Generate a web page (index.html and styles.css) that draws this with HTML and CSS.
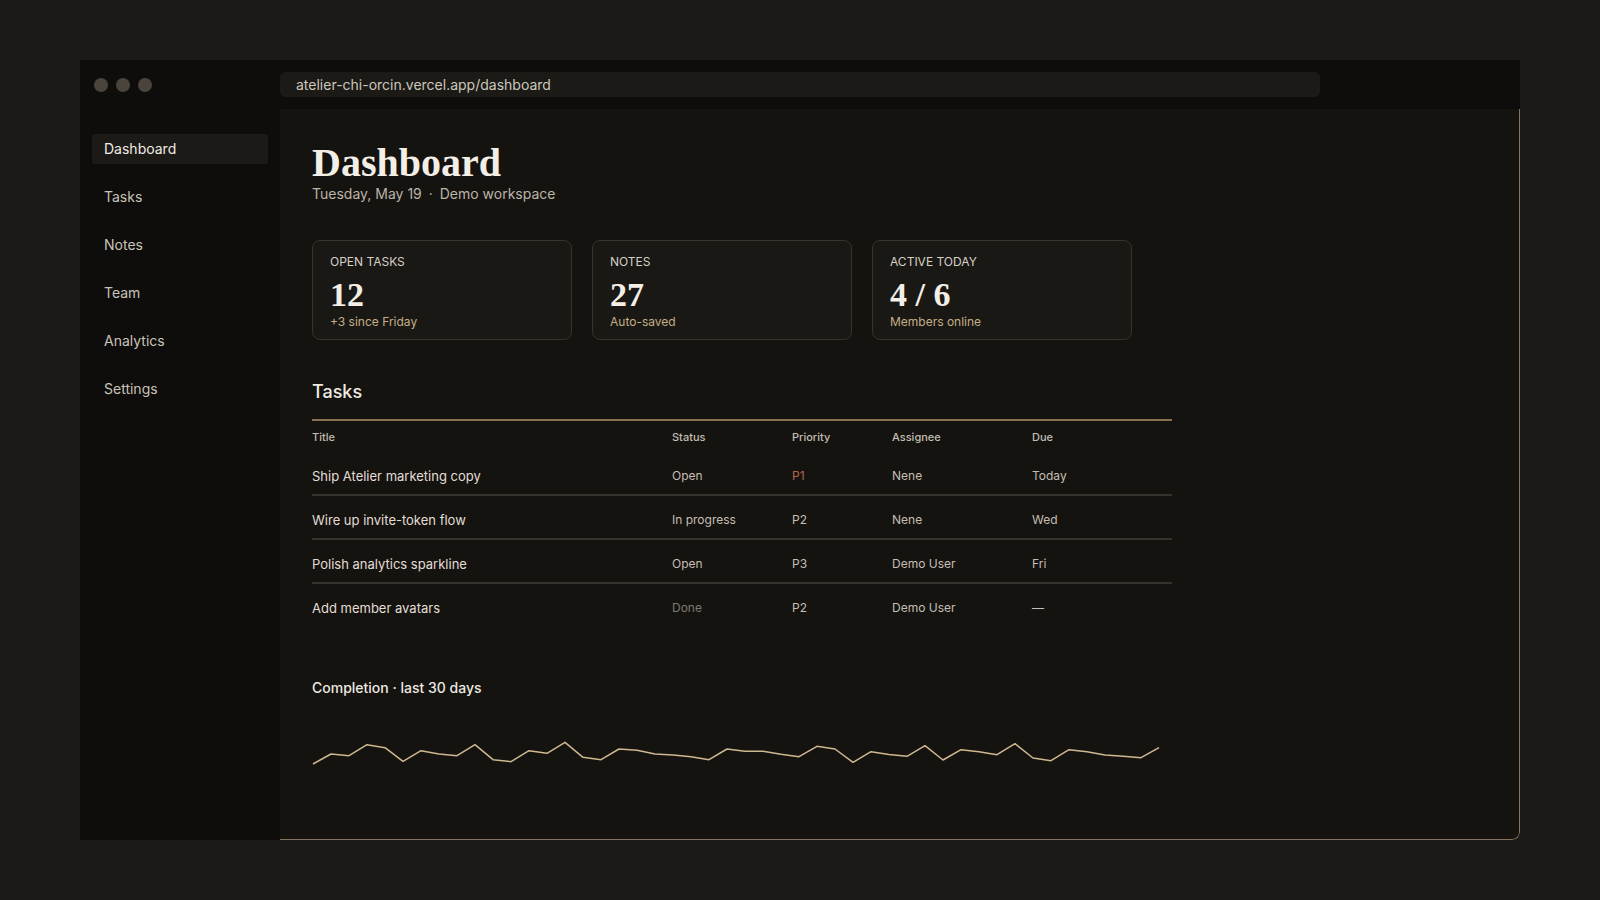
FILE: index.html
```html
<!DOCTYPE html>
<html lang="en">

<head>
  <meta charset="UTF-8">
  <meta name="viewport" content="width=device-width, initial-scale=1.0">
  <title>Atelier · Dashboard</title>
  <link rel="stylesheet" href="styles.css">
</head>

<body>
  <div class="window">
    <!-- 1.标题栏 -->
    <div class="titlebar">
      <div class="dots">
        <span></span><span></span><span></span>
      </div>
      <div class="url">atelier-chi-orcin.vercel.app/dashboard</div>
    </div>

    <div class="frame">
      <!-- 2.侧栏 -->
      <div class="sidebar">
        <a class="item active">Dashboard</a>
        <a class="item">Tasks</a>
        <a class="item">Notes</a>
        <a class="item">Team</a>
        <a class="item">Analytics</a>
        <a class="item">Settings</a>
      </div>

      <!-- 3.内容 -->
      <div class="main">
        <h1 class="title">Dashboard</h1>
        <p class="sub">Tuesday, May 19 <span class="sep">·</span> Demo workspace</p>

        <div class="cards">
          <div class="card">
            <div class="label">OPEN TASKS</div>
            <div class="num">12</div>
            <div class="note">+3 since Friday</div>
          </div>
          <div class="card">
            <div class="label">NOTES</div>
            <div class="num">27</div>
            <div class="note">Auto-saved</div>
          </div>
          <div class="card">
            <div class="label">ACTIVE TODAY</div>
            <div class="num">4 / 6</div>
            <div class="note">Members online</div>
          </div>
        </div>

        <h2 class="h2">Tasks</h2>
        <table class="tasks">
          <colgroup>
            <col class="c-title">
            <col class="c-status">
            <col class="c-prio">
            <col class="c-who">
            <col class="c-due">
          </colgroup>
          <thead>
            <tr>
              <th>Title</th>
              <th>Status</th>
              <th>Priority</th>
              <th>Assignee</th>
              <th>Due</th>
            </tr>
          </thead>
          <tbody>
            <tr>
              <td class="name">Ship Atelier marketing copy</td>
              <td>Open</td>
              <td class="p1">P1</td>
              <td>Nene</td>
              <td>Today</td>
            </tr>
            <tr>
              <td class="name">Wire up invite-token flow</td>
              <td>In progress</td>
              <td>P2</td>
              <td>Nene</td>
              <td>Wed</td>
            </tr>
            <tr>
              <td class="name">Polish analytics sparkline</td>
              <td>Open</td>
              <td>P3</td>
              <td>Demo User</td>
              <td>Fri</td>
            </tr>
            <tr>
              <td class="name">Add member avatars</td>
              <td class="done">Done</td>
              <td>P2</td>
              <td>Demo User</td>
              <td>—</td>
            </tr>
          </tbody>
        </table>

        <h3 class="h3">Completion · last 30 days</h3>
        <svg class="spark" width="860" height="30" viewBox="0 0 860 30">
          <polyline fill="none" stroke="#cdb88f" stroke-width="1.5" stroke-linejoin="round"
            points="1,25 19,15 37,16.7 55,5.7 73,8.7 91,22.3 109,11.7 127,15 145,16.7 163,5.7 181,20.7 199,22.7 217,11.7 235,14.3 253,3.3 271,18.3 289,20.7 307,10 325,11.3 343,15 361,16 379,17.7 397,20.7 415,10 433,12.3 451,12.3 469,15.3 487,17.7 505,7.3 523,10 541,23.3 559,12.7 577,15.5 595,17.3 613,6.7 631,21 649,10.7 667,12.7 685,15.7 703,4.7 721,19 739,21.7 757,10.7 775,12.7 793,16 811,17.3 829,18.7 847,8.7" />
        </svg>
      </div>
    </div>
  </div>
</body>

</html>
```

FILE: styles.css
```css
* {
  margin: 0;
  padding: 0;
  box-sizing: border-box;
}

body {
  height: 900px;
  padding: 60px 80px;
  background-color: #1b1a17;
  font-family: Inter, "Liberation Sans", sans-serif;
  color: #cfc9be;
}

.window {
  display: flex;
  flex-direction: column;
  height: 780px;
  background-color: #0e0d0c;
  border-bottom-right-radius: 8px;
  overflow: hidden;
}

/* 标题栏 */
.titlebar {
  display: flex;
  align-items: center;
  height: 49px;
  padding-right: 200px;
}

.dots {
  display: flex;
  gap: 8px;
  width: 200px;
  padding-left: 14px;
}

.dots span {
  width: 14px;
  height: 14px;
  border-radius: 50%;
  background-color: #4a443c;
}

.url {
  flex: 1;
  height: 25px;
  padding-left: 16px;
  border-radius: 6px;
  background-color: #1b1a17;
  line-height: 25px;
  font-size: 14px;
  color: #cdc7bc;
}

.frame {
  display: flex;
  flex: 1;
}

/* 侧栏 */
.sidebar {
  display: flex;
  flex-direction: column;
  gap: 18px;
  width: 200px;
  padding: 25px 12px;
}

.item {
  display: block;
  height: 30px;
  padding: 0 12px;
  border-radius: 3px;
  line-height: 30px;
  font-size: 14px;
  color: #c9c3b8;
}

.item.active {
  background-color: #1c1a17;
  color: #f0ece4;
}

/* 内容 */
.main {
  flex: 1;
  padding: 32px 32px 0;
  background-color: #151310;
  border-right: 1px solid #857360;
  border-bottom: 1px solid #857360;
  border-bottom-right-radius: 8px;
}

.title {
  font-family: "Liberation Serif", serif;
  font-size: 40px;
  font-weight: 700;
  line-height: 44px;
  color: #f3efe7;
}

.sub {
  font-size: 14px;
  line-height: 17px;
  color: #bab4a9;
}

.sep {
  margin: 0 3px;
}

.cards {
  display: flex;
  gap: 20px;
  margin-top: 38px;
}

.card {
  width: 260px;
  height: 100px;
  padding: 13px 17px;
  border: 1px solid #37332d;
  border-radius: 8px;
  background-color: #1a1815;
}

.label {
  font-size: 12px;
  line-height: 16px;
  color: #d6d0c5;
}

.num {
  margin-top: 6px;
  font-family: "Liberation Serif", serif;
  font-size: 34px;
  font-weight: 700;
  line-height: 38px;
  color: #f3efe7;
}

.note {
  font-size: 12px;
  line-height: 16px;
  color: #c4ae85;
}

.h2 {
  margin-top: 40px;
  font-size: 18px;
  font-weight: 500;
  line-height: 24px;
  color: #efebe3;
}

/* 表格 */
.tasks {
  width: 860px;
  margin-top: 15px;
  border-collapse: collapse;
  border-top: 2px solid #8a6f52;
}

.c-title { width: 360px; }
.c-status { width: 120px; }
.c-prio { width: 100px; }
.c-who { width: 140px; }
.c-due { width: 140px; }

.tasks th {
  height: 32px;
  text-align: left;
  font-size: 11px;
  font-weight: 500;
  color: #c3bdb2;
}

.tasks td {
  padding: 14px 0 8px;
  line-height: 20px;
  font-size: 12px;
  color: #c4beb3;
}

.tasks tbody tr {
  border-bottom: 2px solid #36322d;
}

.tasks tbody tr:last-child {
  border-bottom: none;
}

.tasks td.name {
  font-size: 13px;
  color: #e3ded5;
}

.tasks td.p1 {
  color: #b5654a;
}

.tasks td.done {
  color: #7f796f;
}

.h3 {
  margin-top: 52px;
  font-size: 14px;
  font-weight: 500;
  line-height: 20px;
  color: #ece8e0;
}

.spark {
  display: block;
  margin-top: 41px;
}
```
